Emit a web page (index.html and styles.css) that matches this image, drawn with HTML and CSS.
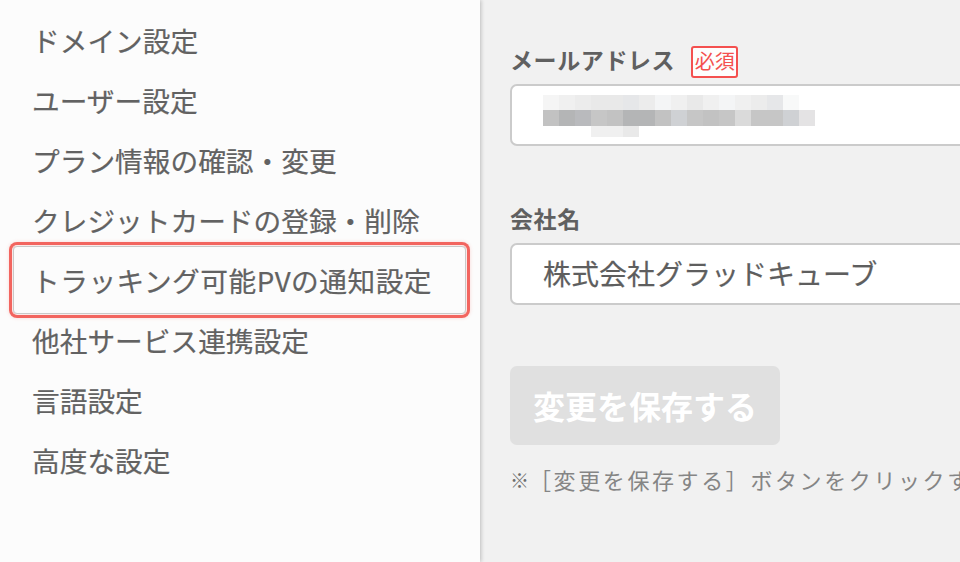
FILE: index.html
```html
<!DOCTYPE html>
<html lang="ja">
<head>
<meta charset="utf-8">
<title>アカウント設定</title>
<link rel="stylesheet" href="styles.css">
</head>
<body>
<div class="page">
  <nav class="sidebar">
    <ul class="menu">
      <li class="menu-item">ドメイン設定</li>
      <li class="menu-item">ユーザー設定</li>
      <li class="menu-item">プラン情報の確認・変更</li>
      <li class="menu-item">クレジットカードの登録・削除</li>
      <li class="menu-item is-focused">トラッキング可能PVの通知設定</li>
      <li class="menu-item">他社サービス連携設定</li>
      <li class="menu-item">言語設定</li>
      <li class="menu-item">高度な設定</li>
    </ul>
  </nav>
  <main class="content">
    <div class="field">
      <div class="label-row">
        <span class="label">メールアドレス</span>
        <span class="badge">必須</span>
      </div>
      <div class="input">
        <div class="mosaic" aria-label="（非表示）">
          <span class="c a1"></span><span class="c a2"></span><span class="c a3"></span><span class="c a4"></span><span class="c a4"></span><span class="c a5"></span><span class="c a3"></span><span class="c a6"></span><span class="c a2"></span><span class="c a4"></span><span class="c a2"></span><span class="c a6"></span><span class="c a2"></span><span class="c a3"></span><span class="c a5"></span><span class="c a7"></span><span class="c a0"></span>
          <span class="c b1"></span><span class="c b2"></span><span class="c b3"></span><span class="c b4"></span><span class="c b1"></span><span class="c b2"></span><span class="c b2"></span><span class="c b1"></span><span class="c b5"></span><span class="c b4"></span><span class="c b1"></span><span class="c b4"></span><span class="c b6"></span><span class="c b4"></span><span class="c b4"></span><span class="c b5"></span><span class="c b7"></span>
          <span class="c a0"></span><span class="c a0"></span><span class="c a0"></span><span class="c a2"></span><span class="c a2"></span><span class="c a4"></span><span class="c a0"></span><span class="c a0"></span><span class="c a0"></span><span class="c a0"></span><span class="c a0"></span><span class="c a0"></span><span class="c a0"></span><span class="c a0"></span><span class="c a0"></span><span class="c a0"></span><span class="c a0"></span>
        </div>
      </div>
    </div>
    <div class="field field-company">
      <div class="label-row">
        <span class="label">会社名</span>
      </div>
      <div class="input">
        <span class="input-text">株式会社グラッドキューブ</span>
      </div>
    </div>
    <div class="button">変更を保存する</div>
    <p class="note"><span class="note-mark">※</span>［変更を保存する］ボタンをクリックすると変更内容が保存されます。</p>
  </main>
</div>
</body>
</html>
```

FILE: styles.css
```css
* {
  box-sizing: border-box;
}

html, body {
  margin: 0;
  padding: 0;
  width: 960px;
  height: 562px;
  overflow: hidden;
}

body {
  font-family: "Noto Sans CJK JP", "Noto Sans", sans-serif;
  color: #646464;
  background: #f1f1f1;
}

.page {
  display: flex;
  height: 562px;
}

.sidebar {
  flex: 0 0 480px;
  background: #fcfcfc;
  padding: 10px 14px 0 13px;
  position: relative;
  z-index: 1;
  box-shadow: 1px 0 4px rgba(0, 0, 0, 0.22);
}

.menu {
  list-style: none;
  margin: 0;
  padding: 0;
}

.menu-item {
  height: 60px;
  line-height: 60px;
  padding-left: 19px;
  font-size: 27.7px;
  color: #626262;
  white-space: nowrap;
  -webkit-text-stroke: 0.2px #626262;
}

.menu-item.is-focused {
  height: 68px;
  line-height: 66px;
  margin: -4px 0;
  padding-left: 18px;
  letter-spacing: 0.5px;
  border: 1px solid #c9c9c9;
  border-radius: 4px;
  box-shadow: 0 0 0 1px #fbe9e8, 0 0 0 4px #f2655f, 0 0 3px 5px rgba(242, 101, 95, 0.15);
}

.content {
  flex: 1;
  padding: 46px 0 0 30px;
  overflow: hidden;
  white-space: nowrap;
}

.field {
  width: 640px;
}

.field-company {
  margin-top: 59px;
}

.label-row {
  display: flex;
  align-items: center;
  gap: 16px;
  height: 31px;
  margin-bottom: 7px;
}

.label {
  font-size: 23px;
  font-weight: bold;
  letter-spacing: 0.6px;
  color: #606060;
  line-height: 31px;
  position: relative;
  top: -2px;
}

.badge {
  display: inline-flex;
  align-items: center;
  justify-content: center;
  width: 47px;
  height: 32px;
  border: 2px solid #f4504f;
  border-radius: 3px;
  color: #f4504f;
  font-size: 20px;
  line-height: 1;
  background: #fdfdfd;
  padding-bottom: 1px;
}

.input {
  height: 62px;
  background: #fff;
  border: 2px solid #cbcbcb;
  border-radius: 7px;
  display: flex;
  align-items: center;
  padding-left: 31px;
}

.input-text {
  font-size: 28px;
  color: #5e5e5e;
  line-height: 1;
  position: relative;
  top: -1px;
  -webkit-text-stroke: 0.2px #5e5e5e;
}

.mosaic {
  display: grid;
  grid-template-columns: repeat(17, 16px);
  grid-template-rows: 15px 16px 11px;
  margin-top: 1px;
}

.c { display: block; }
.a0 { background: transparent; }
.a1 { background: #f5f5f5; }
.a2 { background: #f0f0f0; }
.a3 { background: #ececec; }
.a4 { background: #e9e9e9; }
.a5 { background: #e6e7e9; }
.a6 { background: #f4f5f6; }
.a7 { background: #f8f9f9; }
.b1 { background: #c2c2c2; }
.b2 { background: #b4b5b6; }
.b3 { background: #b9babd; }
.b4 { background: #c6c6c6; }
.b5 { background: #cfd1d4; }
.b6 { background: #dadada; }
.b7 { background: #e4e3e4; }

.button {
  margin-top: 61px;
  width: 270px;
  height: 79px;
  background: #e0e0e0;
  border-radius: 7px;
  color: #ffffff;
  font-size: 32px;
  font-weight: bold;
  display: flex;
  align-items: center;
  justify-content: center;
  line-height: 1;
  padding-bottom: 2px;
}

.note {
  margin: 19px 0 0 0;
  font-size: 22px;
  letter-spacing: 2.6px;
  line-height: 30px;
  color: #858585;
}

.note-mark {
  font-size: 19px;
  font-weight: bold;
  letter-spacing: 0;
  margin-right: 0;
  color: #6e6e6e;
  position: relative;
  top: -1px;
}
```
